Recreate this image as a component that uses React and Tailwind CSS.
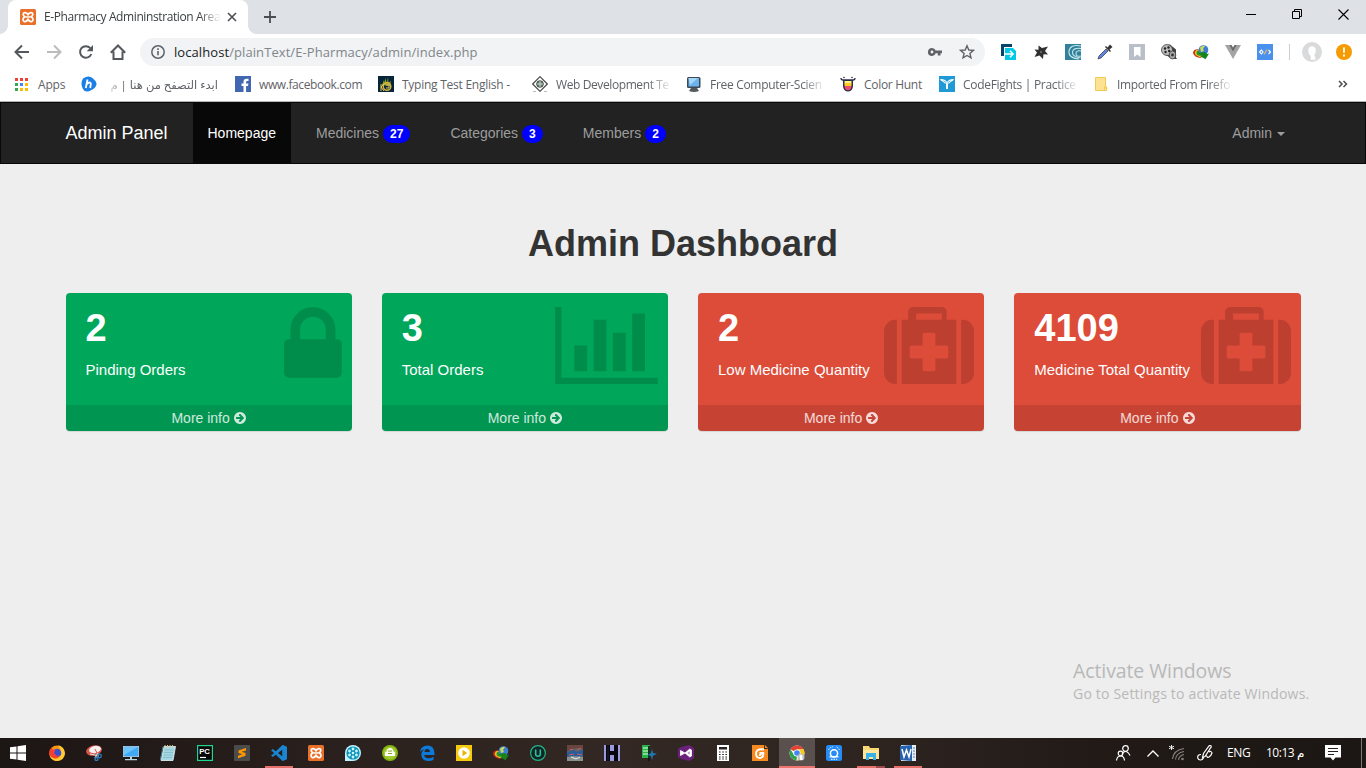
import React from "react";

const Svg = ({ children, className = "", size = "w-4 h-4", box = "0 0 16 16" }) => (
  <svg viewBox={box} className={`block shrink-0 ${size} ${className}`} fill="none">
    {children}
  </svg>
);

/* ---------- shared logos ---------- */

const Xampp = () => (
  <Svg>
    <rect width="16" height="16" rx="1.5" fill="#e8702a" />
    <path d="M8 6.3C7.2 3 3.2 2.8 3.2 5.3c0 1.4.9 2 1.6 2.5-1 .6-1.8 1.2-1.8 2.8C3 13.500 7.200 13.200 8 9.800c.8 3.400 5 3.700 5 .8 0-1.600-.8-2.200-1.800-2.800.7-.5 1.600-1.100 1.600-2.500C12.800 2.800 8.800 3 8 6.300z" stroke="#fff" strokeWidth="1.7" />
    <path d="M5.500 8h5" stroke="#fff" strokeWidth="1.500" />
  </Svg>
);

const Idm = () => (
  <Svg>
    <ellipse cx="5.500" cy="9.500" rx="5.500" ry="4" fill="#c62b1d" transform="rotate(20 5.500 9.500)" />
    <ellipse cx="6.300" cy="9.300" rx="4.500" ry="3.300" fill="#f2c318" transform="rotate(20 6.300 9.300)" />
    <ellipse cx="7" cy="9" rx="3.500" ry="2.800" fill="#27942b" />
    <circle cx="10.500" cy="6" r="4.800" fill="#3c7fd0" />
    <path d="M7 3.500q3-2.500 5-1.500l-2 3 1 2-3 1z" fill="#c9d95a" />
    <path d="M5 9l7-1 2 2 2-.5-3.500 5.800L7 12l2-.7z" fill="#14841b" />
  </Svg>
);

/* ---------- toolbar icons ---------- */

const BackIcon = () => (
  <Svg>
    <path d="M15 8H2M8 1.500L1.500 8 8 14.500" stroke="#54585d" strokeWidth="2" />
  </Svg>
);
const ForwardIcon = () => (
  <Svg>
    <path d="M1 8h13M8 1.500L14.500 8 8 14.500" stroke="#babcbe" strokeWidth="2" />
  </Svg>
);
const ReloadIcon = () => (
  <Svg>
    <path d="M13.300 10A5.800 5.800 0 1 1 12.300 4.200" stroke="#54585d" strokeWidth="2" />
    <path d="M15 1v6.300H8.700z" fill="#54585d" />
  </Svg>
);
const HomeIcon = () => (
  <Svg>
    <path d="M.8 8.800L8 1.500l7.200 7.300M3.500 7.500v7.500h9V7.500" stroke="#54585d" strokeWidth="2" />
  </Svg>
);

const extensions = [
  <Svg key="a">
    <path d="M0 0h11v3H3v9H0z" fill="#07456a" />
    <path d="M4 4h8l3 3v9H4z" fill="#00c8e6" />
    <path d="M3 10h9M9 6.800l3 3.200-3 3.200" stroke="#fff" strokeWidth="1.600" />
  </Svg>,
  <Svg key="b">
    <path d="M5.500 1.500L9 4l6-1.500L12 7l3 3.500-4.500-.2L10 15 6.500 11.500 1.500 13 4 8.500 1.500 5.500l4 .3z" fill="#303030" />
    <circle cx="8" cy="8" r="1" fill="#777" />
  </Svg>,
  <Svg key="c">
    <rect width="16" height="16" fill="#31819a" />
    <path d="M16 2Q5 0 4 7t10 8M16 4.500Q8 3.500 7.500 8t8 6M16 7q-5-1-5 2.500t5 2.500" stroke="#c6e8ee" strokeWidth="1.100" />
  </Svg>,
  <Svg key="d">
    <path d="M1 15l1-3 7-7 2 2-7 7z" fill="#5b83e8" stroke="#444" strokeWidth=".8" />
    <path d="M8 3l5 5 1-1-1.500-1.500L15.500 3 13 .5l-2.500 3L9 2z" fill="#333" />
  </Svg>,
  <Svg key="e">
    <rect width="16" height="16" fill="#b9bfc9" />
    <path d="M5 3h6.500v10L8.200 10.500 5 13z" fill="#fff" />
  </Svg>,
  <Svg key="f">
    <path d="M2 2l7-1.500 6 5v8L16 15h-5L2 9z" fill="#3f3f3f" />
    <circle cx="6" cy="6" r="5.500" fill="#bbb" stroke="#333" strokeWidth=".7" />
    <circle cx="4" cy="4.500" r="1.200" fill="#222" />
    <circle cx="7.500" cy="3.500" r="1.200" fill="#222" />
    <circle cx="4.500" cy="8" r="1.200" fill="#222" />
    <circle cx="8.200" cy="7" r="1.200" fill="#222" />
    <ellipse cx="11.500" cy="11" rx="3.300" ry="4" fill="#aaa" stroke="#333" strokeWidth=".7" />
    <circle cx="11.500" cy="11" r="1.400" fill="#333" />
  </Svg>,
  <Idm key="g" />,
  <Svg key="h">
    <path d="M0 1h4l4 7 4-7h4L8 15z" fill="#a3a3a3" />
    <path d="M4 1h2.500L8 3.500 9.500 1H12L8 8z" fill="#6b6b6b" />
  </Svg>,
  <Svg key="i">
    <rect width="16" height="16" fill="#4a90ee" />
    <path d="M4.500 6L2.500 8l2 2 1.500-2zM11.500 6l2 2-2 2" stroke="#fff" strokeWidth="1.100" />
    <path d="M7 10.500l3-5" stroke="#f3b75d" strokeWidth="1.200" />
  </Svg>,
];

/* ---------- bookmarks ---------- */

const bookmarks = [
  {
    label: "www.facebook.com",
    slot: "w-[143px]",
    text: "w-[108px] tracking-[-0.4px]",
    icon: (
      <Svg>
        <rect width="16" height="16" fill="#4267b2" />
        <path d="M8.500 16v-6H6.500V7.500h2V6q0-3.300 3.200-3.300h1.800V5h-1.200q-1.200 0-1.200 1.200v1.300h2.300L13 10h-1.900v6z" fill="#fff" />
      </Svg>
    ),
  },
  {
    label: "Typing Test English -",
    slot: "w-[154px]",
    text: "w-[114px] tracking-[-0.25px]",
    icon: (
      <Svg>
        <rect width="16" height="16" fill="#07253a" />
        <path d="M4 9L6 4l1 3V2l2 5 1-6 .5 6L13 5l-1 5z" fill="#8ea72c" />
        <circle cx="9" cy="10.500" r="3.800" stroke="#d9b23c" strokeWidth="1.500" />
        <path d="M3 8v7M3 11l3-3M3 11l3 4M8 9h3v3H8" stroke="#e6c85b" />
      </Svg>
    ),
  },
  {
    label: "Web Development Te",
    slot: "w-[154px]",
    text: "w-[114px] tracking-[-0.4px]",
    fade: true,
    icon: (
      <Svg>
        <path d="M8 .7L15.300 8 8 15.300.7 8z" stroke="#4b4b4b" strokeWidth="1.200" />
        <circle cx="8" cy="8" r="3.300" fill="#658672" stroke="#444" />
        <path d="M5 8h6M8 4.500v7" stroke="#dde6df" strokeWidth=".8" />
        <path d="M1 15.500h3M12 15.500h3" stroke="#bbb" />
      </Svg>
    ),
  },
  {
    label: "Free Computer-Scien",
    slot: "w-[154px]",
    text: "w-[113px] tracking-[-0.3px]",
    fade: true,
    icon: (
      <Svg>
        <rect x="1" y="1" width="13.500" height="11" rx="1.500" fill="#3b4a55" />
        <rect x="2.500" y="2" width="10.500" height="8.500" fill="#6ab3ec" />
        <path d="M2.500 2H12L4 9z" fill="#a5d6f7" />
        <path d="M5 12h6l2 3q-5 2-10 0z" fill="#535a5e" />
      </Svg>
    ),
  },
  {
    label: "Color Hunt",
    slot: "w-[99px]",
    text: "w-[62px] tracking-[-0.3px]",
    icon: (
      <Svg>
        <path d="M1 2q0 2 2 2h10q2 0 2-2" stroke="#2b2e4a" strokeWidth="1.300" />
        <circle cx="4" cy="1.500" r=".8" fill="#2b2e4a" />
        <circle cx="12" cy="1.500" r=".8" fill="#2b2e4a" />
        <path d="M3 4h10v6a5 5.500 0 0 1-10 0z" fill="#2b2e4a" />
        <path d="M4.500 5h7v2.500h-7z" fill="#fff57a" />
        <path d="M4.500 7h7v3h-7z" fill="#ffc928" />
        <path d="M4.500 10h7q0 4-3.500 4.300Q4.500 14 4.500 10z" fill="#ee4b73" />
      </Svg>
    ),
  },
  {
    label: "CodeFights | Practice",
    slot: "w-[154px]",
    text: "w-[113px] tracking-[-0.3px]",
    fade: true,
    icon: (
      <Svg>
        <rect width="16" height="16" fill="#1f9ad6" />
        <path d="M1 3q5-.3 7 3 2-3.300 7-3-.7 2.200-3 2.700l-1.500 1.500L9 7.500V13H7V7.500l-1.500-.3L4 5.700Q1.700 5.200 1 3z" fill="#fff" />
        <path d="M4.500 4.800l3 2M11.500 4.800l-3 2" stroke="#1f9ad6" strokeWidth=".7" />
      </Svg>
    ),
  },
  {
    label: "Imported From Firefo",
    slot: "w-[154px]",
    text: "w-[114px] tracking-[-0.35px]",
    fade: true,
    icon: (
      <Svg>
        <path d="M2.500 1.500h10v9.500h1.200v3.500H2.500z" fill="#fde293" stroke="#f0cb52" />
        <path d="M11.500 14.500V11h2v3.500z" fill="#fde293" stroke="#f0cb52" />
      </Svg>
    ),
  },
];

const appDots = [
  "bg-[#ea4335]", "bg-[#ea4335]", "bg-[#ea4335]",
  "bg-[#34a853]", "bg-[#4285f4]", "bg-[#fbbc05]",
  "bg-[#34a853]", "bg-[#fbbc05]", "bg-[#fbbc05]",
];

function Browser() {
  return (
    <header className="flex h-[102px] flex-col border-b border-[#b6b4b6] bg-white font-['Open_Sans','DejaVu_Sans',sans-serif]">
      <div className="flex h-[34px] shrink-0 bg-[#dee1e6]">
        <div className="h-2 w-2 self-end bg-[radial-gradient(circle_at_0_0,transparent_7.5px,white_8px)]" />
        <div className="flex w-[240px] items-center rounded-t-lg bg-white pl-3">
          <Xampp />
          <span className="ml-2 w-[177px] overflow-hidden whitespace-nowrap text-[12px] tracking-[-0.4px] text-[#3c4043] [mask-image:linear-gradient(to_right,black_155px,transparent_177px)]">
            E-Pharmacy Admininstration Area
          </span>
          <Svg className="ml-[6px]" size="h-[10px] w-[10px]" box="0 0 10 10">
            <path d="M1 1l8 8M9 1L1 9" stroke="#4a4e52" strokeWidth="1.600" />
          </Svg>
        </div>
        <div className="h-2 w-2 self-end bg-[radial-gradient(circle_at_100%_0,transparent_7.5px,white_8px)]" />
        <Svg className="ml-2 mt-[11px]" size="h-3 w-3" box="0 0 12 12">
          <path d="M6 0v12M0 6h12" stroke="#4a4e52" strokeWidth="1.800" />
        </Svg>
        <div className="ml-auto mr-[17px] mt-[9px] flex gap-[36px]">
          <Svg size="h-[11px] w-[10px]" box="0 0 10 11">
            <path d="M0 5.500h10" stroke="#000" />
          </Svg>
          <Svg size="h-[11px] w-[10px]" box="0 0 10 11">
            <path d="M.5 2.500h7v7h-7zM2.500 2V.5h7v7H8" stroke="#000" />
          </Svg>
          <Svg size="h-[11px] w-[11px]" box="0 0 11 11">
            <path d="M.5.5l10 10M10.500.5l-10 10" stroke="#000" strokeWidth="1.100" />
          </Svg>
        </div>
      </div>

      <div className="flex h-9 shrink-0 items-center pl-[14px]">
        <div className="flex gap-4">
          <BackIcon />
          <ForwardIcon />
          <ReloadIcon />
          <HomeIcon />
        </div>
        <div className="ml-[14px] flex h-7 w-[845px] shrink-0 items-center rounded-full bg-[#f1f3f4] pl-[11px] pr-[10px]">
          <Svg size="h-[14px] w-[14px]" box="0 0 14 14">
            <circle cx="7" cy="7" r="6.200" stroke="#5f6368" strokeWidth="1.500" />
            <path d="M7 6v4.300M7 3.300v1.600" stroke="#5f6368" strokeWidth="1.600" />
          </Svg>
          <span className="ml-[9px] mt-[2px] whitespace-nowrap text-[13px] tracking-[0.08px] text-[#80868b]">
            <span className="text-[#202124]">localhost</span>/plainText/E-Pharmacy/admin/index.php
          </span>
          <Svg className="ml-auto">
            <path d="M5 4a4 4 0 1 0 3.700 5.300h2.100v2.200h2.700V9.300H15V6.600H8.700A4 4 0 0 0 5 4zm0 2.600a1.400 1.400 0 1 1 0 2.800 1.400 1.400 0 0 1 0-2.800z" fill="#5f6368" />
          </Svg>
          <Svg className="ml-4">
            <path d="M8 1.800l1.800 4.200 4.600.4-3.500 3 1.100 4.500L8 11.500l-4 2.400 1.100-4.500-3.500-3L6.200 6z" stroke="#5f6368" strokeWidth="1.400" />
          </Svg>
        </div>
        <div className="ml-4 flex gap-4">{extensions}</div>
        <div className="ml-4 h-4 w-px bg-[#ccced1]" />
        <Svg className="ml-3" size="h-5 w-5" box="0 0 20 20">
          <circle cx="10" cy="10" r="10" fill="#d9dadb" />
          <path d="M6.300 8a3.800 4.500 0 0 1 7.500 0q0 3-1.500 5l1.500 4.500-6 .5V13.500Q6.300 11.500 6.300 8z" fill="#fff" />
          <path d="M8 18.500v-5" stroke="#c5c6c7" strokeWidth=".8" />
        </Svg>
        <Svg className="ml-[14px]">
          <circle cx="8" cy="8" r="8" fill="#f59b00" />
          <path d="M8 3.500v5.300M8 10.500v2" stroke="#fff" strokeWidth="1.800" />
        </Svg>
      </div>

      <div className="flex h-[28px] items-center pl-[15px] text-[12px] text-[#5f6368]">
        <div className="grid grid-cols-3 gap-x-[2px] gap-y-[2px]">
          {appDots.map((c, i) => (
            <i key={i} className={`h-[3px] w-[3px] ${c}`} />
          ))}
        </div>
        <span className="ml-[10px] w-[43px] pt-px tracking-[-0.2px]">Apps</span>
        <Svg>
          <path d="M2 2.500Q8-1.500 12 2.500q4 3 3.500 6-1 3.500-5 5.500Q4 18 1.500 12-.8 7 2 2.500z" fill="#1a7fe6" />
          <path d="M6.500 3.500L4.800 12M5.500 8.500Q7 6.300 9 6.500q1.200.3.800 2L9.200 12" stroke="#fff" strokeWidth="1.800" />
        </Svg>
        <span dir="rtl" className="ml-[10px] mr-[17px] w-[111px] overflow-hidden whitespace-nowrap pt-px text-[11.5px] [mask-image:linear-gradient(to_left,black_95px,transparent_111px)]">
          ابدء التصفح من هنا | م
        </span>
        {bookmarks.map((b) => (
          <div key={b.label} className={`flex shrink-0 items-center gap-2 ${b.slot}`}>
            {b.icon}
            <span
              className={`overflow-hidden whitespace-nowrap pt-px ${b.text} ${
                b.fade ? "[mask-image:linear-gradient(to_right,black_92px,transparent_116px)]" : ""
              }`}
            >
              {b.label}
            </span>
          </div>
        ))}
        <Svg className="ml-auto mr-[18px]" size="h-[8px] w-[10px]" box="0 0 10 8">
          <path d="M1 1l3 3-3 3M5.500 1l3 3-3 3" stroke="#4a4e52" strokeWidth="1.500" />
        </Svg>
      </div>
    </header>
  );
}

/* ---------- admin site ---------- */

const NavItem = ({ label, count, active }) => (
  <a className={`flex h-[60px] items-center ${active ? "w-[98px] bg-[#080808] pl-[14.5px] text-white" : "px-[15px]"}`}>
    {label}
    {count && (
      <span className="ml-[4px] mt-[2px] rounded-[10px] bg-[#0000ff] px-[7px] py-[3px] text-[12px] font-bold leading-none text-white">
        {count}
      </span>
    )}
  </a>
);

const LockGlyph = () => (
  <svg viewBox="320 128 1152 1408" className="h-[70.7px] w-[57.9px]" fill="currentColor">
    <path d="M640 768h512v-192q0-106-75-181t-181-75-181 75-75 181v192zm832 96v576q0 40-28 68t-68 28h-960q-40 0-68-28t-28-68v-576q0-40 28-68t68-28h32v-192q0-184 132-316t316-132 316 132 132 316v192h32q40 0 68 28t28 68z" />
  </svg>
);
const ChartGlyph = () => (
  <svg viewBox="0 128 2048 1536" className="h-[77.1px] w-[102.9px]" fill="currentColor">
    <path d="M640 896v512h-256v-512h256zm384-512v1024h-256v-1024h256zm1024 1152v128h-2048v-1536h128v1408h1920zm-640-896v768h-256v-768h256zm384-384v1152h-256v-1152h256z" />
  </svg>
);
const MedkitGlyph = () => (
  <svg viewBox="0 128 1792 1536" className="h-[77.1px] w-[90px]" fill="currentColor">
    <path d="M1280 1120v-192q0-14-9-23t-23-9h-224v-224q0-14-9-23t-23-9h-192q-14 0-23 9t-9 23v224h-224q-14 0-23 9t-9 23v192q0 14 9 23t23 9h224v224q0 14 9 23t23 9h192q14 0 23-9t9-23v-224h224q14 0 23-9t9-23zm-640-736h512v-128h-512v128zm-384 0v1280h-32q-92 0-158-66t-66-158v-832q0-92 66-158t158-66h32zm1184 0v1280h-1088v-1280h128v-160q0-40 28-68t68-28h576q40 0 68 28t28 68v160h128zm352 224v832q0 92-66 158t-158 66h-32v-1280h32q92 0 158 66t66 158z" />
  </svg>
);
const ArrowGlyph = () => (
  <svg viewBox="128 128 1536 1536" className="h-3 w-3" fill="currentColor">
    <path d="M1413 896q0-27-18-45l-91-91-362-362q-18-18-45-18t-45 18l-91 91q-18 18-18 45t18 45l189 189h-502q-26 0-45 19t-19 45v128q0 26 19 45t45 19h502l-189 189q-19 19-19 45t19 45l91 91q18 18 45 18t45-18l362-362 91-91q18-18 18-45zm251 0q0 209-103 385.500t-279.500 279.500-385.500 103-385.500-103-279.500-279.500-103-385.500 103-385.500 279.500-279.500 385.500-103 385.500 103 279.500 279.500 103 385.500z" />
  </svg>
);

const cards = [
  { value: "2", label: "Pinding Orders", color: "bg-[#00a65a]", glyph: <LockGlyph /> },
  { value: "3", label: "Total Orders", color: "bg-[#00a65a]", glyph: <ChartGlyph /> },
  { value: "2", label: "Low Medicine Quantity", color: "bg-[#dd4b39]", glyph: <MedkitGlyph /> },
  { value: "4109", label: "Medicine Total Quantity", color: "bg-[#dd4b39]", glyph: <MedkitGlyph /> },
];

function Site() {
  return (
    <div className="flex flex-1 flex-col bg-[#eeeeee] font-['Liberation_Sans',Arial,sans-serif]">
      <nav className="flex h-[62px] items-center border border-[#080808] bg-[#222222] pl-[64.5px] text-[14px] text-[#9d9d9d]">
        <span className="w-[127.5px] whitespace-nowrap text-[18px] text-white">Admin Panel</span>
        <div className="flex gap-[10px]">
          <NavItem label="Homepage" active />
          <NavItem label="Medicines" count="27" />
          <NavItem label="Categories" count="3" />
          <NavItem label="Members" count="2" />
        </div>
        <div className="ml-auto mr-[80px] flex items-center">
          Admin
          <i className="ml-[5px] mt-[2px] border-x-4 border-t-4 border-x-transparent border-t-[#9d9d9d]" />
        </div>
      </nav>
      <main className="flex flex-1 flex-col px-[65.5px] pt-[60px]">
        <h1 className="text-center text-[36px] font-bold leading-[40px] text-[#333333]">Admin Dashboard</h1>
        <div className="mt-[29px] grid grid-cols-4 gap-[30px]">
          {cards.map((c) => (
            <section
              key={c.label}
              className={`flex h-[138px] flex-col overflow-hidden rounded-[4px] text-white shadow-[0_1px_1px_rgba(0,0,0,0.1)] ${c.color}`}
            >
              <div className="flex flex-1 items-start justify-between pl-5 pr-[10px]">
                <div className="mt-[14px] whitespace-nowrap">
                  <div className="text-[38px] font-bold leading-[42px]">{c.value}</div>
                  <p className="mt-[10px] text-[15px] leading-[21px]">{c.label}</p>
                </div>
                <div className="mt-[14.3px] text-black/15">{c.glyph}</div>
              </div>
              <footer className="flex h-[26px] items-center justify-center gap-1 bg-black/10 text-[14px] text-white/80">
                More info <ArrowGlyph />
              </footer>
            </section>
          ))}
        </div>
        <div className="mb-[34px] ml-auto mr-[-8.5px] mt-auto w-[236px] whitespace-nowrap font-['Open_Sans',sans-serif] text-[#b8b8b8]">
          <div className="text-[19.5px] leading-[26px] tracking-[-0.1px]">Activate Windows</div>
          <div className="text-[14px] leading-[20px] tracking-[0.2px]">Go to Settings to activate Windows.</div>
        </div>
      </main>
    </div>
  );
}

/* ---------- taskbar ---------- */

const apps = [
  <Svg key="firefox">
    <circle cx="8" cy="8.300" r="7.700" fill="#ff9414" />
    <path d="M9 .3q6.500 1.500 7 8-.5 7-8 7.700-6-.3-7.500-6 3 4 7.500 3 5-2 4-7-1-3-3-5.700z" fill="#ffcb2e" />
    <circle cx="8" cy="8" r="4.300" fill="#3a4fd0" />
    <path d="M.5 10Q-.5 5 2.500 2.500l1 2 3 .5-1.500 3 3 3 2.500-1q-1 4-5 3.500Q2 13 .5 10z" fill="#f4402c" />
  </Svg>,
  <Svg key="snip">
    <ellipse cx="8" cy="5.500" rx="8" ry="5" fill="#d7564c" transform="rotate(-12 8 5.500)" />
    <ellipse cx="9" cy="4.500" rx="6" ry="3.600" fill="#f4f1ee" transform="rotate(-12 9 4.500)" />
    <path d="M4 9l9 2M9 13l3-5" stroke="#ddd" strokeWidth="1.200" />
    <path d="M9 4l2 4" stroke="#d7564c" />
    <circle cx="13.500" cy="11" r="1.800" stroke="#2e7fc1" strokeWidth="1.300" />
    <circle cx="10.500" cy="14" r="1.500" stroke="#2e7fc1" strokeWidth="1.300" />
  </Svg>,
  <Svg key="pc">
    <rect x=".3" y="1.300" width="15.400" height="10.400" fill="#3fa9f5" stroke="#cfeaff" strokeWidth=".6" />
    <path d="M1 2h14L1 10z" fill="#6cc4fb" />
    <path d="M7 12h2v2H7zM2 14h12v1.300H2z" fill="#b7d5e5" />
  </Svg>,
  <Svg key="notepad">
    <path d="M4 1.500h11.500L13 15.500H1z" fill="#a7d8e3" stroke="#e9f8fb" strokeWidth=".8" />
    <path d="M3 1.500L.3 15" stroke="#477e8e" />
    <path d="M4.500 5h9M4 7.500h9M3.500 10h9M3 12.500h9" stroke="#6fb0c0" strokeWidth=".6" />
    <path d="M5 0v2.500M7.500 0v2.500M10 0v2.500M12.500 0v2.500" stroke="#d9ca96" />
  </Svg>,
  <Svg key="pycharm">
    <rect x=".6" y=".6" width="14.800" height="14.800" fill="#080808" stroke="#20d68b" strokeWidth="1.200" />
    <text x="2.300" y="8.800" fontSize="7.800" fontWeight="700" fontFamily="Liberation Sans" fill="#fff" textLength="10.500">PC</text>
    <path d="M3 12.500h6" stroke="#fff" strokeWidth="1.200" />
  </Svg>,
  <Svg key="sublime">
    <rect width="16" height="16" rx="1" fill="#4b4b4b" />
    <path d="M12 3L4.500 5.500V8l4 1.300L4 10.700v2.500l7.500-2.500V8L7.500 6.800 12 5.500z" fill="#ff9800" />
  </Svg>,
  <Svg key="vscode">
    <path d="M11.500 0L16 2v12l-4.500 2L1.500 6.500 0 5.500 1.800 4l9.700 7.500v-7L1.800 12 0 10.500l1.500-1z" fill="#1a86d2" />
    <path d="M11.500 0L16 2v12l-4.500 2z" fill="#1a86d2" />
  </Svg>,
  <Xampp key="xampp" />,
  <Svg key="reel">
    <path d="M8 0a8 8 0 0 1 0 16H0V8a8 8 0 0 1 8-8z" fill="#bff3ff" />
    <circle cx="8" cy="8" r="6.600" fill="#0e93b8" />
    {[0, 60, 120, 180, 240, 300].map((a) => (
      <circle key={a} cx="8" cy="4" r="1.400" fill="#c9f6ff" transform={`rotate(${a} 8 8)`} />
    ))}
    <circle cx="8" cy="8" r="1.300" fill="#c9f6ff" />
  </Svg>,
  <Svg key="green">
    <circle cx="8" cy="8" r="8" fill="#83b414" />
    <circle cx="8" cy="8" r="6.300" fill="#a1ca2c" />
    <path d="M3 11V7.500l1.500-1Q5 3 8 3t3.500 3.500l1.500 1V11z" fill="#fff" />
    <path d="M6 6h4M6 8.500h4" stroke="#83a822" />
  </Svg>,
  <Svg key="edge">
    <path d="M.8 7Q2 .5 8.500.4q6.800.2 7 8V10H5.300q.3 3.200 4.200 3.200 2.500 0 5-1.500v3.200Q12 16 9 16 2.500 15.500 2.300 9.500q.2-3.500 3.500-5.200Q2.500 4.700.8 7zM5.500 7h5.300q0-3-2.500-3T5.500 7z" fill="#0b7ad8" />
  </Svg>,
  <Svg key="player">
    <rect width="16" height="16" fill="#f6cb0d" />
    <circle cx="8" cy="8" r="5.800" fill="#fff" />
    <path d="M6.500 4.800L11.300 8l-4.800 3.200z" fill="#e8b800" />
  </Svg>,
  <Idm key="idm" />,
  <Svg key="u">
    <circle cx="8" cy="8" r="7.400" fill="#10262a" stroke="#23b585" strokeWidth="1.200" />
    <path d="M5.700 4.500v4.700q0 2 2.300 2t2.300-2V4.500" stroke="#29c792" strokeWidth="1.500" />
  </Svg>,
  <Svg key="football">
    <rect width="16" height="16" fill="#58616a" />
    <path d="M0 0h16v4l-7-1-9 3z" fill="#6a443f" />
    <path d="M0 8l5-3 5 2 6-2v6l-6 1-4-1-6 1z" fill="#285c9a" />
    <path d="M3 5l3-1M10 5l4-2M2 10l5-1M10 9l5 1" stroke="#d35d5d" />
    <path d="M0 12l7-1 9 1v4H0z" fill="#89918f" />
    <path d="M4 12l5 2 4-2" stroke="#e6edf0" />
  </Svg>,
  <Svg key="h">
    <rect width="16" height="16" fill="#9a98df" />
    <path d="M2 0h4v6h4V0h4v16h-4v-6H6v6H2z" fill="#08080c" />
    <path d="M4 0v16" stroke="#34344e" strokeWidth=".6" />
  </Svg>,
  <Svg key="script">
    <path d="M1 0h8v13H1z" fill="#29b24a" />
    <path d="M2 3h5M2 6h5M2 9h5" stroke="#d8ffdf" strokeWidth="1.200" />
    <path d="M8 1v15" stroke="#111" strokeWidth="1.600" />
    <path d="M11 4l1 4 4 .7-4 2-1 4.300-1-4-3.500-1 3.500-2z" fill="#1f78b4" />
  </Svg>,
  <Svg key="vs">
    <path d="M0 4l3-2 8-2 5 3v10l-5 3-8-2-3-2z" fill="#6a217a" />
    <path d="M2.500 5.500L7 8l4.800-4 1.700 1v6l-1.700 1L7 8l-4.500 2.500zM9.500 8l2.300 2V6z" fill="#fff" stroke="#fff" strokeWidth=".8" fillRule="evenodd" />
  </Svg>,
  <Svg key="calc">
    <rect x="2" width="12" height="16" fill="#fff" />
    <path d="M4 2h8v2.500H4z" fill="#28211f" />
    <path d="M4 7h8M4 9.500h8M4 12h8M4 14h8" stroke="#28211f" strokeWidth="1.200" strokeDasharray="1.600 1.600" />
  </Svg>,
  <Svg key="foxit">
    <path d="M0 0h12l4 4v12H0z" fill="#f6891f" />
    <path d="M12 0v4h4z" fill="#302622" />
    <path d="M13 0v3h3z" fill="#f6891f" />
    <path d="M12 4.500Q4 3 4 9q.3 4 4 4 3.700-.5 3.300-5H7.500M7 10q2 .5 2.300-2" stroke="#fff" strokeWidth="1.900" />
  </Svg>,
  <Svg key="chrome">
    <circle cx="8" cy="8" r="7.500" fill="#fff" />
    <path d="M8 8L1.500 4.300A7.500 7.500 0 0 1 14.500 4.300H8z" fill="#e24133" />
    <path d="M8 4.300h6.500A7.500 7.500 0 0 1 8 15.500L11.200 9.800z" fill="#fbc61b" />
    <path d="M1.500 4.300L5 10l3 1.500L7.500 15.500A7.500 7.500 0 0 1 1.500 4.300z" fill="#31a150" />
    <circle cx="8" cy="8" r="3.500" fill="#fff" />
    <circle cx="8" cy="8" r="2.800" fill="#4286f5" />
    <circle cx="12" cy="12" r="3.500" fill="#bdbdbd" />
    <path d="M10.500 11q1.500-3 3 0l-.3 2 .5 2h-2.500z" fill="#fff" />
  </Svg>,
  <Svg key="qq">
    <rect width="16" height="16" rx="2.500" fill="#258cf6" />
    <circle cx="8" cy="8.300" r="3.600" stroke="#fff" strokeWidth="1.500" />
    <path d="M3.500 11.800h9" stroke="#fff" strokeWidth="1.300" />
    <path d="M2.500 5Q4 2 7 1.800M13.500 5Q12.500 3 10.500 2M5 14.300h6" stroke="#fff" strokeDasharray="1.500 1" />
  </Svg>,
  <Svg key="files">
    <path d="M0 1h6l1 2h9v11H0z" fill="#f8d875" />
    <path d="M0 5h16v9H0z" fill="#ffe79b" />
    <path d="M3 8h10v7h-3v-3H6v3H3z" fill="#39b2ea" />
  </Svg>,
  <Svg key="word">
    <rect x="1" width="15" height="16" fill="#e6eef7" />
    <path d="M0 1l12-1v16L0 15z" fill="#2862ad" />
    <path d="M2 4l2 8 2.500-7L9 12l2-8" stroke="#fff" strokeWidth="1.500" />
    <path d="M13 3h2M13 6h2M13 9h2M13 12h2" stroke="#2862ad" strokeWidth=".8" />
  </Svg>,
];

const underline = {
  6: "w-7 bg-[#e8706b]",
  20: "w-9 bg-[#f0746e]",
  22: "w-7 bg-[linear-gradient(to_right,#e8706b_19px,#9a4b49_19px)]",
  23: "w-7 bg-[#e8706b]",
};

function Taskbar() {
  return (
    <footer className="flex h-[30px] shrink-0 items-center bg-[linear-gradient(to_right,#1c1614,#2a201d_25%,#332823_45%,#2d2420_65%,#211a17_80%,#1c1714)] font-['Open_Sans','DejaVu_Sans',sans-serif] text-[12px] text-white">
      <div className="w-[39px] pl-[10px]">
        <Svg>
          <path d="M0 2.300L6.500 1.400V7.500H0zM7.500 1.200L16 0v7.500H7.500zM0 8.500h6.500v6.100L0 13.700zM7.500 8.500H16V16l-8.500-1.200z" fill="#fff" />
        </Svg>
      </div>
      <div className="flex h-full gap-px">
        {apps.map((icon, i) => (
          <div key={i} className={`flex h-full w-9 flex-col items-center ${i === 20 ? "bg-[#5a514e]" : ""}`}>
            <div className="mt-[7px] h-[21px]">{icon}</div>
            {underline[i] && <div className={`h-[2px] ${underline[i]}`} />}
          </div>
        ))}
      </div>
      <div className="ml-auto flex items-center">
        <Svg>
          <circle cx="10.500" cy="3.500" r="2.800" stroke="#fff" strokeWidth="1.200" />
          <path d="M7 9.500Q8 6.500 10.500 6.500T15 10.500" stroke="#fff" strokeWidth="1.200" />
          <circle cx="5.500" cy="8.500" r="2.300" stroke="#fff" strokeWidth="1.200" />
          <path d="M1.500 15.500q.5-4.300 4-4.500t4 4.500" stroke="#fff" strokeWidth="1.200" />
        </Svg>
        <Svg className="ml-4" size="h-[7px] w-3" box="0 0 12 7">
          <path d="M.5 6.500L6 1l5.500 5.500" stroke="#fff" strokeWidth="1.300" />
        </Svg>
        <Svg className="ml-[10px]">
          <path d="M2.500 0v5M0 1.200l5 2.600M5 1.200L0 3.800" stroke="#fff" strokeWidth=".9" />
          <path d="M3.500 14Q4.500 5 15 3.500M6.500 14.500Q7 8 15 6.500M9.500 15q.5-4.500 5.500-5.500" stroke="#85807e" strokeWidth="1.100" />
          <circle cx="13.500" cy="14" r="1.300" fill="#85807e" />
        </Svg>
        <Svg className="ml-3">
          <path d="M5.500 12.500L6.500 8.500 12 1q1.500-1.500 2 0 .5 1-.5 2L8 11.500zM4 9.500Q.5 9.500.7 12.500 1 15 3.500 15q2.500 0 3-2.500M9.500 10.500Q10 13 12 12t3-4q-1-2.500-3-1" stroke="#fff" strokeWidth="1.200" />
        </Svg>
        <span className="ml-[14px] w-[39px] tracking-[-0.3px]">ENG</span>
        <span className="flex w-[59px] gap-[3px] tracking-[-0.5px]">
          10:13 <span>م</span>
        </span>
        <Svg>
          <path d="M0 0h16v12.500h-5.500L8 15.500l-2.500-3H0z" fill="#fff" />
          <path d="M3 3.500h10M3 6.500h10M3 9.500h6" stroke="#28201d" />
        </Svg>
        <div className="ml-5 mr-1 h-[30px] w-px bg-[#7c7674]" />
      </div>
    </footer>
  );
}

export default function App() {
  return (
    <div className="flex h-[768px] w-[1366px] flex-col overflow-hidden">
      <Browser />
      <Site />
      <Taskbar />
    </div>
  );
}
